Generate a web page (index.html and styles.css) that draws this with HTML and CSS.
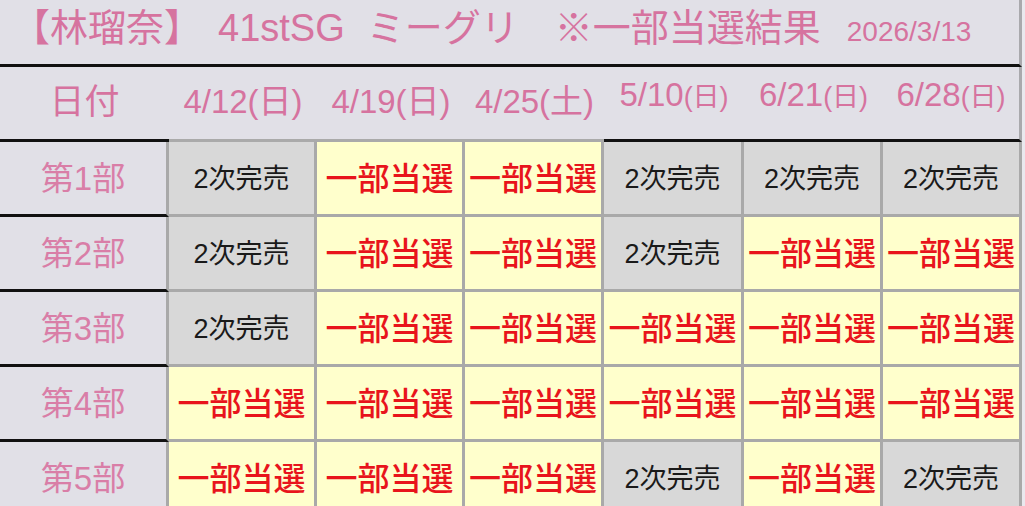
FILE: index.html
```html
<!DOCTYPE html>
<html lang="ja">
<head>
<meta charset="utf-8">
<title>林瑠奈 41stSG ミーグリ 一部当選結果</title>
<link rel="stylesheet" href="styles.css">
</head>
<body>
<div class="sheet">
  <div class="title">
    <span class="t-name">【林瑠奈】</span>
    <span class="t-sg">41stSG</span>
    <span class="t-mg">ミーグリ</span>
    <span class="t-res">※一部当選結果</span>
    <span class="t-date">2026/3/13</span>
  </div>
  <div class="grid">
    <div class="hd hd-label">日付</div>
    <div class="hd hd-soft">4/12(日)</div>
    <div class="hd hd-soft">4/19(日)</div>
    <div class="hd hd-soft">4/25(土)</div>
    <div class="hd">5/10<small>(日)</small></div>
    <div class="hd">6/21<small>(日)</small></div>
    <div class="hd hd-last">6/28<small>(日)</small></div>

    <div class="rl">第1部</div>
    <div class="c sold">2次完売</div>
    <div class="c win">一部当選</div>
    <div class="c win">一部当選</div>
    <div class="c sold">2次完売</div>
    <div class="c sold">2次完売</div>
    <div class="c sold">2次完売</div>

    <div class="rl">第2部</div>
    <div class="c sold">2次完売</div>
    <div class="c win">一部当選</div>
    <div class="c win">一部当選</div>
    <div class="c sold">2次完売</div>
    <div class="c win">一部当選</div>
    <div class="c win">一部当選</div>

    <div class="rl">第3部</div>
    <div class="c sold">2次完売</div>
    <div class="c win">一部当選</div>
    <div class="c win">一部当選</div>
    <div class="c win">一部当選</div>
    <div class="c win">一部当選</div>
    <div class="c win">一部当選</div>

    <div class="rl">第4部</div>
    <div class="c win">一部当選</div>
    <div class="c win">一部当選</div>
    <div class="c win">一部当選</div>
    <div class="c win">一部当選</div>
    <div class="c win">一部当選</div>
    <div class="c win">一部当選</div>

    <div class="rl">第5部</div>
    <div class="c win">一部当選</div>
    <div class="c win">一部当選</div>
    <div class="c win">一部当選</div>
    <div class="c sold">2次完売</div>
    <div class="c win">一部当選</div>
    <div class="c sold">2次完売</div>
  </div>
</div>
</body>
</html>
```

FILE: styles.css
```css
html, body {
  margin: 0;
  padding: 0;
}
body {
  background: #e9e8ee;
  font-family: "Liberation Sans", "Noto Sans CJK JP", sans-serif;
  overflow: hidden;
  height: 506px;
}
.sheet {
  width: 1022px;
  background: #e1e0e7;
}
.title {
  box-sizing: border-box;
  height: 67px;
  border-bottom: 3px solid #111;
  border-right: 3px solid #a9a9ad;
  display: flex;
  align-items: baseline;
  color: #d6739f;
  font-size: 38px;
  line-height: 56px;
  white-space: nowrap;
  padding-top: 0;
}
.t-name { margin-left: 12px; }
.t-sg { margin-left: 16px; }
.t-mg { margin-left: 22px; }
.t-res { margin-left: 36px; }
.t-date { margin-left: 26px; font-size: 28px; }

.grid {
  display: grid;
  grid-template-columns: 169px 148px 148px 139px 140px 139px 139px;
  grid-auto-rows: 75px;
}
.grid > div {
  box-sizing: border-box;
  display: flex;
  align-items: center;
  justify-content: center;
  white-space: nowrap;
  border-bottom: 3px solid #a9a9a9;
  padding-bottom: 4px;
}
.hd {
  color: #d6739f;
  font-size: 33px;
  align-items: baseline !important;
  padding-top: 8px;
  border-bottom-color: #111 !important;
}
.hd small {
  font-size: 27px;
}
.hd-soft {
  border-bottom-color: #aaaaaa !important;
}
.hd-label {
  font-family: "Noto Sans CJK JP", sans-serif;
  font-size: 35px;
  padding-top: 6px;
}
.hd-last {
  border-right: 3px solid #a9a9ad;
}
.rl {
  color: #d97ea7;
  font-size: 33px;
  border-bottom-color: #111 !important;
  border-right: 3px solid #a9a9a9;
}
.c {
  border-right: 3px solid #a9a9a9;
}
.sold {
  background: #d8d8d8;
  color: #1a1a1a;
  font-size: 27px;
}
.win {
  background: #ffffcc;
  color: #e8141c;
  font-size: 32px;
  font-weight: 500;
  font-family: "Noto Sans CJK JP", sans-serif;
}
```
